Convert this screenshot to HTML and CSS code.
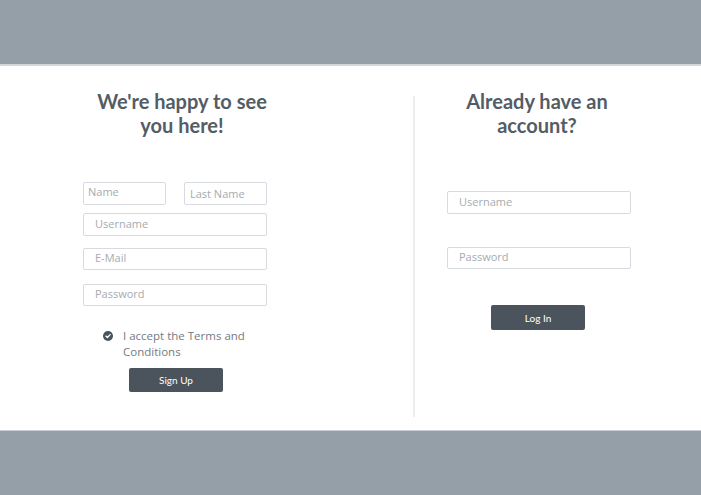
FILE: index.html
```html
<!DOCTYPE html>
<html>
<head>
<meta charset="utf-8">
<link rel="stylesheet" href="styles.css">
</head>
<body>
<header class="topbar"></header>
<main class="panel">
  <section class="col col-left">
    <h1 class="title title-left">We're happy to see you here!</h1>
    <div class="name-row">
      <input class="field field-half field-name" placeholder="Name">
      <input class="field field-half field-last" placeholder="Last Name">
    </div>
    <input class="field field-user" placeholder="Username">
    <input class="field field-mail" placeholder="E-Mail">
    <input class="field field-pass" placeholder="Password">
    <div class="terms">
      <span class="check"><svg width="10" height="10" viewBox="0 0 10 10"><circle cx="5" cy="5" r="5" fill="#4b545d"/><path d="M2.9 5.1 L4.4 6.5 L7.1 3.6" fill="none" stroke="#fff" stroke-width="1.3" stroke-linecap="round" stroke-linejoin="round"/></svg></span>
      <span class="terms-text">I accept the Terms and Conditions</span>
    </div>
    <button class="btn btn-signup">Sign Up</button>
  </section>
  <div class="divider"></div>
  <section class="col col-right">
    <h1 class="title title-right">Already have an account?</h1>
    <input class="field field-login-user" placeholder="Username">
    <input class="field field-login-pass" placeholder="Password">
    <button class="btn btn-login">Log In</button>
  </section>
</main>
<footer class="bottombar"></footer>
</body>
</html>
```
FILE: styles.css
```css
* { box-sizing: border-box; }
body {
  margin: 0;
  background: #ffffff;
  font-family: "Open Sans", "Liberation Sans", sans-serif;
}
.topbar {
  height: 66px;
  background: #959fa8;
  border-bottom: 2px solid #d2d7dc;
}
.panel {
  height: 364px;
  display: flex;
  background: #fff;
}
.col {
  display: flex;
  flex-direction: column;
  align-items: flex-start;
}
.col-left {
  width: 413px;
  padding-left: 83px;
}
.col-right {
  padding-left: 32px;
}
.divider {
  width: 2px;
  background: #ebedef;
  margin-top: 30px;
  height: 321px;
}
.title {
  margin: 23px 0 0;
  font-family: Lato, "Liberation Sans", sans-serif;
  font-weight: 700;
  font-size: 20px;
  line-height: 24px;
  color: #545c65;
  text-align: center;
}
.title-left { width: 198px; }
.title-right { width: 180px; }
.field {
  display: block;
  width: 184px;
  height: 23px;
  border: 1px solid #d7dbdf;
  border-radius: 2px;
  padding: 0 11px 3px;
  font-family: "Open Sans", "Liberation Sans", sans-serif;
  font-size: 11px;
  color: #6b7178;
  background: #fff;
  outline: none;
}
.field::placeholder { color: #a6abb1; }
.name-row {
  display: flex;
  gap: 18px;
  margin-top: 45px;
}
.field-half { width: 83px; }
.field-name { padding: 0 4px 5px; }
.field-last { padding: 0 5px 1px; }
.field-user { margin-top: 8px; }
.field-mail { margin-top: 12px; height: 22px; }
.field-pass { margin-top: 14px; height: 22px; }
.terms {
  display: flex;
  align-items: flex-start;
  margin-top: 22px;
  padding-left: 20px;
}
.check {
  width: 10px;
  height: 16px;
  display: flex;
  align-items: center;
  margin-right: 10px;
}
.check svg { display: block; }
.terms-text {
  width: 130px;
  font-size: 11.5px;
  line-height: 16px;
  color: #747a81;
}
.btn {
  display: block;
  width: 94px;
  height: 24px;
  border: none;
  border-radius: 2px;
  background: #4b545d;
  color: #fff;
  font-family: Lato, "Liberation Sans", sans-serif;
  font-size: 10px;
  padding: 0;
}
.btn-signup { margin: 8px 0 0 46px; }
.field-login-user { margin-top: 54px; }
.field-login-pass { margin-top: 33px; height: 22px; }
.btn-login { margin: 36px 0 0 44px; height: 25px; }
.bottombar {
  height: 65px;
  background: #959fa8;
  border-top: 1px solid #c8ced3;
}
```
